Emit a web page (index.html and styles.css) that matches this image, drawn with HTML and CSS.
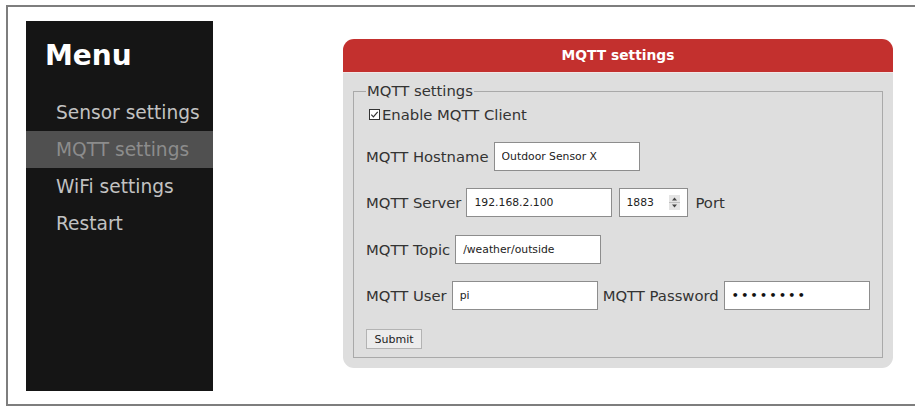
FILE: index.html
```html
<!DOCTYPE html>
<html lang="en">
<head>
<meta charset="utf-8">
<title>MQTT settings</title>
<link rel="stylesheet" href="styles.css">
</head>
<body>
<div class="frame">
  <nav class="sidebar">
    <h1 class="menu-title">Menu</h1>
    <a class="menu-item" href="#">Sensor settings</a>
    <a class="menu-item active" href="#">MQTT settings</a>
    <a class="menu-item" href="#">WiFi settings</a>
    <a class="menu-item" href="#">Restart</a>
  </nav>

  <main class="content">
    <section class="panel">
      <header class="panel-head">MQTT settings</header>
      <div class="panel-body">
        <form class="settings" onsubmit="return false">
          <fieldset class="group">
            <legend class="group-title">MQTT settings</legend>

            <label class="check">
              <span class="check-box">
                <svg width="11" height="11" viewBox="0 0 11 11">
                  <rect x="0.5" y="0.5" width="10" height="10" fill="#fff" stroke="#333"/>
                  <path d="M2.3 5.6 L4.4 7.8 L8.7 2.9" fill="none" stroke="#333" stroke-width="1.2"/>
                </svg>
              </span>Enable MQTT Client
            </label>

            <div class="row">
              <span class="label">MQTT Hostname</span>
              <input class="field" type="text" value="Outdoor Sensor X">
            </div>

            <div class="row">
              <span class="label">MQTT Server</span>
              <input class="field" type="text" value="192.168.2.100">
              <span class="spin-field">
                <span class="spin-value">1883</span>
                <span class="spinner">
                  <svg width="11" height="15" viewBox="0 0 11 15">
                    <rect x="0" y="0" width="11" height="15" fill="#e4e4e4"/>
                    <line x1="0" y1="7.5" x2="11" y2="7.5" stroke="#bdbdbd"/>
                    <path d="M3 5.5 L5.5 2.5 L8 5.5 Z" fill="#444"/>
                    <path d="M3 9.5 L5.5 12.5 L8 9.5 Z" fill="#444"/>
                  </svg>
                </span>
              </span>
              <span class="label">Port</span>
            </div>

            <div class="row">
              <span class="label">MQTT Topic</span>
              <input class="field" type="text" value="/weather/outside">
            </div>

            <div class="row">
              <span class="label">MQTT User</span>
              <input class="field" type="text" value="pi">
              <span class="label">MQTT Password</span>
              <input class="field secret" type="password" value="secret12">
            </div>

            <button class="submit" type="submit">Submit</button>
          </fieldset>
        </form>
      </div>
    </section>
  </main>
</div>
</body>
</html>
```

FILE: styles.css
```css
* {
  box-sizing: border-box;
}

html, body {
  margin: 0;
  padding: 0;
  background: #fff;
}

body {
  font-family: "DejaVu Sans", Verdana, sans-serif;
  color: #333;
}

.frame {
  display: flex;
  align-items: flex-start;
  margin: 5px 0 0 6px;
  height: 401px;
  padding: 14px 0 0 18px;
  border: 2px solid #7e7e7e;
  border-right: none;
}

/* left navigation column */
.sidebar {
  width: 187px;
  height: 370px;
  background: #151515;
  display: flex;
  flex-direction: column;
  flex: none;
}

.menu-title {
  margin: 0;
  height: 73px;
  padding: 18px 0 0 19px;
  font-size: 28px;
  line-height: 34px;
  font-weight: bold;
  color: #fff;
}

.menu-item {
  display: block;
  height: 37px;
  line-height: 37px;
  padding-left: 30px;
  font-size: 18.6px;
  color: #c2c2c2;
  text-decoration: none;
}

.menu-item.active {
  background: #505050;
  color: #8c8c8c;
}

/* settings card */
.content {
  margin: 18px 0 0 130px;
}

.panel {
  width: 550px;
}

.panel-head {
  height: 34px;
  line-height: 33px;
  background: #c3302e;
  border-radius: 11px 11px 0 0;
  border-bottom: 1px solid #f1e6e6;
  color: #fff;
  font-weight: bold;
  font-size: 13.8px;
  text-align: center;
}

.panel-body {
  height: 295px;
  background: #dedede;
  border-radius: 0 0 11px 11px;
  padding-top: 9px;
}

.group {
  margin: 0 10px;
  padding: 4px 12px 8px;
  border: 1px solid #a9a9a9;
  min-width: 0;
}

.group-title {
  padding: 0 1px;
  font-size: 14.8px;
  line-height: 18px;
  color: #333;
}

.check {
  display: flex;
  align-items: center;
  height: 20px;
  padding-left: 3px;
  font-size: 14.8px;
  color: #333;
}

.check-box {
  display: inline-flex;
  margin-right: 2px;
}

.row {
  display: flex;
  align-items: center;
  gap: 5px;
  height: 29px;
  margin-top: 17.6px;
}

.label {
  font-size: 14.8px;
  color: #333;
  white-space: nowrap;
}

.field {
  width: 146px;
  height: 29px;
  margin: 0;
  padding: 0 7px;
  border: 1px solid #8d8d8d;
  background: #fff;
  font-family: "DejaVu Sans", Verdana, sans-serif;
  font-size: 10.8px;
  color: #222;
  outline: none;
}

.field.secret {
  font-size: 11px;
  letter-spacing: 2.4px;
  font-weight: bold;
  color: #111;
}

.spin-field {
  display: flex;
  align-items: center;
  justify-content: space-between;
  width: 69px;
  height: 29px;
  margin: 0 2px;
  padding: 0 7px 0 6px;
  border: 1px solid #8d8d8d;
  background: #fff;
  font-size: 10.8px;
  color: #222;
}

.spinner {
  display: inline-flex;
}

.submit {
  display: block;
  margin-top: 19px;
  width: 56px;
  height: 20px;
  padding: 0;
  border: 1px solid #b3b3b3;
  background: #ececec;
  font-family: "DejaVu Sans", Verdana, sans-serif;
  font-size: 11px;
  color: #222;
}
```
